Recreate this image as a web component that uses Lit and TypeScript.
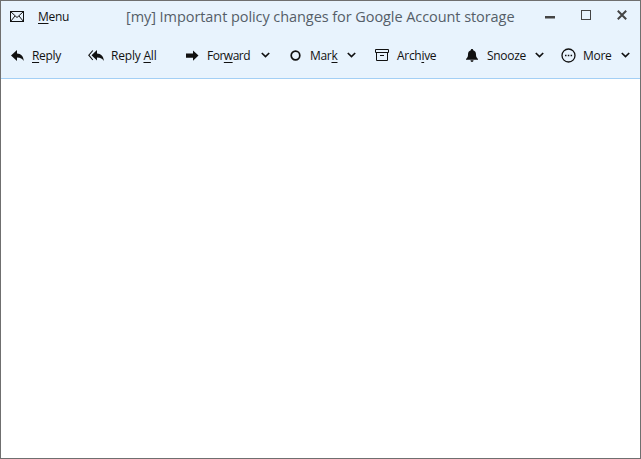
import { LitElement, html, css, svg } from "lit";
import { customElement } from "lit/decorators.js";

const chev = html`<svg class="chev" width="9" height="6" viewBox="0 0 9 6"><path d="M.8 1 4.5 4.6 8.2 1" fill="none" stroke="#111" stroke-width="1.7"/></svg>`;

const icons = {
  reply: svg`<path d="M0 5.5 6 0v3.4c4 .2 6.400 2.700 6.800 7.600C11.400 8.600 9.600 7.500 6 7.400V11Z" fill="#111"/>`,
  replyAll: svg`<path d="M4.800 .5 .8 5.200 4.800 10" fill="none" stroke="#111" stroke-width="1.100"/><path d="M3.500 5.200 9 0v3.400c4 .2 6.400 2.700 7 7.600-1.500-2.400-3.300-3.500-7-3.600V10.500Z" fill="#111"/>`,
  forward: svg`<path d="M12.500 5.500 7 .5v3H0v4.200h7v3Z" fill="#111"/>`,
  bell: svg`<path d="M6 0c.8 0 1.200.5 1.200 1.200C9.200 1.800 10 3.400 10 5.500c0 2 .5 3.400 2 4.500v.8H0V10c1.500-1.100 2-2.500 2-4.500 0-2.100.8-3.700 2.800-4.300C4.800.5 5.200 0 6 0ZM4.500 11.300h3C7.500 12.300 6.800 13 6 13s-1.500-.7-1.500-1.700Z" fill="#111"/>`,
};

@customElement("app-root")
export class AppRoot extends LitElement {
  static styles = css`
    :host {
      display: block;
      width: 641px;
      height: 459px;
      font-family: "Open Sans", "Noto Sans", sans-serif;
      color: #111;
    }
    .window {
      box-sizing: border-box;
      width: 641px;
      height: 459px;
      border: 1px solid #6f6f6f;
      background: #fff;
    }
    .head {
      box-sizing: border-box;
      height: 78px;
      background: #e8f3fd;
      border-bottom: 1px solid #a3cff5;
      display: flex;
      flex-direction: column;
    }
    .titlebar {
      height: 32px;
      display: flex;
      align-items: center;
      padding-left: 9px;
    }
    .menu {
      font-size: 12px;
      letter-spacing: -0.3px;
      margin-left: 14px;
      width: 88px;
    }
    .title {
      font-size: 14.500px;
      letter-spacing: -0.07px;
      color: #555e68;
      white-space: nowrap;
      width: 419px;
    }
    .controls { display: flex; align-items: flex-start; height: 9px; margin-bottom: 5px; }
    .ctrl-min { margin-top: 6px; }
    .ctrl-max { margin-left: 26px; }
    .ctrl-close { margin-left: 26px; }
    .toolbar {
      height: 46px;
      display: flex;
      align-items: center;
      padding-left: 10px;
    }
    .btn {
      display: flex;
      align-items: center;
      font-size: 12px;
      letter-spacing: -0.3px;
      white-space: nowrap;
      flex: none;
    }
    .btn svg { flex: none; display: block; }
    .btn .label { margin-left: 8px; }
    .btn .chev { margin-left: 11px; }
    u { text-underline-offset: 2px; text-decoration-thickness: 1px; }
    .r { width: 77px; }
    .ra { width: 98px; }
    .f { width: 104px; }
    .m { width: 85px; }
    .a { width: 91px; }
    .s { width: 95px; }
    .mo { width: 70px; }
    .ra .label { margin-left: 7px; letter-spacing: -0.2px; }
    .f .label { letter-spacing: -0.5px; }
    .m .label { margin-left: 9px; }
    .m .chev { margin-left: 10px; }
    .s .label { margin-left: 9px; }
    .s .chev { margin-left: 9px; }
    .mo .label { margin-left: 7px; }
    .mo .chev { margin-left: 10px; }
  `;

  render() {
    return html`
      <div class="window">
        <div class="head">
          <div class="titlebar">
            <svg width="14" height="11" viewBox="0 0 14 11"><rect x=".5" y=".5" width="13" height="10" fill="none" stroke="#111"/><path d="M.5.500 7 6.500 13.500.500M.5 10.500 5 5M13.500 10.500 9 5" fill="none" stroke="#111"/></svg>
            <span class="menu"><u>M</u>enu</span>
            <span class="title">[my] Important policy changes for Google Account storage</span>
            <div class="controls">
              <svg class="ctrl-min" width="10" height="3" viewBox="0 0 10 3"><rect width="10" height="2.500" fill="#444"/></svg>
              <svg class="ctrl-max" width="10" height="10" viewBox="0 0 10 10"><rect x=".5" y=".5" width="9" height="9" fill="none" stroke="#444"/></svg>
              <svg class="ctrl-close" width="10" height="10" viewBox="0 0 10 10"><path d="M.8.800 9.200 9.200M9.200.800.800 9.200" stroke="#444" stroke-width="2"/></svg>
            </div>
          </div>
          <div class="toolbar">
            <div class="btn r"><svg width="13" height="11" viewBox="0 0 13 11">${icons.reply}</svg><span class="label"><u>R</u>eply</span></div>
            <div class="btn ra"><svg width="16" height="11" viewBox="0 0 16 11">${icons.replyAll}</svg><span class="label">Reply <u>A</u>ll</span></div>
            <div class="btn f"><svg width="13" height="11" viewBox="0 0 13 11">${icons.forward}</svg><span class="label">For<u>w</u>ard</span>${chev}</div>
            <div class="btn m"><svg width="11" height="11" viewBox="0 0 11 11"><circle cx="5.500" cy="5.500" r="4.300" fill="none" stroke="#111" stroke-width="1.700"/></svg><span class="label">Mar<u>k</u></span>${chev}</div>
            <div class="btn a"><svg width="14" height="12" viewBox="0 0 14 12"><path d="M.5.500h13v3H.5ZM1.500 3.500v8h11v-8M5 6.500h4" fill="none" stroke="#111"/></svg><span class="label">Arch<u>i</u>ve</span></div>
            <div class="btn s"><svg width="12" height="13" viewBox="0 0 12 13">${icons.bell}</svg><span class="label">Snooze</span>${chev}</div>
            <div class="btn mo"><svg width="15" height="15" viewBox="0 0 15 15"><circle cx="7.500" cy="7.500" r="6.500" fill="none" stroke="#111" stroke-width="1.300"/><path d="M4 6.700h1.500v1.500H4ZM6.800 6.700h1.500v1.500H6.800ZM9.600 6.700h1.500v1.500H9.600Z" fill="#111"/></svg><span class="label">More</span>${chev}</div>
          </div>
        </div>
      </div>
    `;
  }
}
